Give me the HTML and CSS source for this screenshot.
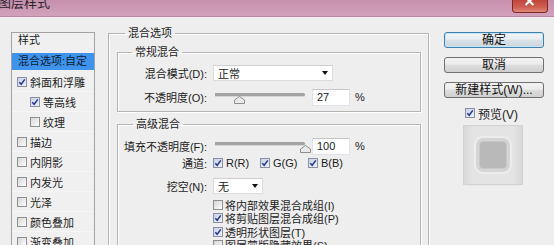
FILE: index.html
```html
<!doctype html>
<html lang="zh-CN">
<head>
	<meta charset="UTF-8">
	<title>图层样式</title>
	<link rel="stylesheet" href="styles.css">
</head>
<body>
	<div class="dlg">
		<div class="titlebar">
			<span class="title">图层样式</span>
			<span class="close">
				<svg width="36" height="13" viewBox="0 0 36 13"><path d="M14 -3 L22 5 M22 -3 L14 5" stroke="#fff" stroke-width="2.2" fill="none"/></svg>
			</span>
		</div>
		<div class="main">
			<div class="stylelist">
				<div class="head">样式</div>
				<div class="cur">混合选项:自定</div>
				<div class="item"><span class="cb on"><svg viewBox="0 0 8 8"><path d="M1.3 4.2 L3.2 6.3 L6.8 1.4"/></svg></span>斜面和浮雕</div>
				<div class="item sub"><span class="cb on"><svg viewBox="0 0 8 8"><path d="M1.3 4.2 L3.2 6.3 L6.8 1.4"/></svg></span>等高线</div>
				<div class="item sub"><span class="cb"></span>纹理</div>
				<div class="item"><span class="cb"></span>描边</div>
				<div class="item"><span class="cb"></span>内阴影</div>
				<div class="item"><span class="cb"></span>内发光</div>
				<div class="item"><span class="cb"></span>光泽</div>
				<div class="item"><span class="cb"></span>颜色叠加</div>
				<div class="item"><span class="cb"></span>渐变叠加</div>
			</div>

			<fieldset class="grp outer">
				<legend>混合选项</legend>
				<fieldset class="grp inner">
					<legend>常规混合</legend>
					<div class="row">
						<span class="lbl">混合模式(D):</span>
						<span class="dd wide">正常<i class="arr"></i></span>
					</div>
					<div class="row">
						<span class="lbl">不透明度(O):</span>
						<span class="slider"><i class="thumb" style="left:27%"><svg width="11" height="8" viewBox="0 0 11 8"><path d="M5.5 0.5 L10.5 4 L10.5 7.5 L0.5 7.5 L0.5 4 Z" fill="#e9e9e9" stroke="#8d8d8d"/></svg></i></span>
						<span class="num">27</span>
						<span class="pct">%</span>
					</div>
				</fieldset>
				<fieldset class="grp inner adv">
					<legend>高级混合</legend>
					<div class="row fill">
						<span class="lbl">填充不透明度(F):</span>
						<span class="slider"><i class="thumb" style="left:100%"><svg width="11" height="8" viewBox="0 0 11 8"><path d="M5.5 0.5 L10.5 4 L10.5 7.5 L0.5 7.5 L0.5 4 Z" fill="#e9e9e9" stroke="#8d8d8d"/></svg></i></span>
						<span class="num">100</span>
						<span class="pct">%</span>
					</div>
					<div class="row chan">
						<span class="lbl">通道:</span>
						<span class="ch"><span class="cb on"><svg viewBox="0 0 8 8"><path d="M1.3 4.2 L3.2 6.3 L6.8 1.4"/></svg></span>R(R)</span>
						<span class="ch"><span class="cb on"><svg viewBox="0 0 8 8"><path d="M1.3 4.2 L3.2 6.3 L6.8 1.4"/></svg></span>G(G)</span>
						<span class="ch"><span class="cb on"><svg viewBox="0 0 8 8"><path d="M1.3 4.2 L3.2 6.3 L6.8 1.4"/></svg></span>B(B)</span>
					</div>
					<div class="row knock">
						<span class="lbl">挖空(N):</span>
						<span class="dd short">无<i class="arr"></i></span>
					</div>
					<div class="opts">
						<div class="opt"><span class="cb"></span>将内部效果混合成组(I)</div>
						<div class="opt"><span class="cb on"><svg viewBox="0 0 8 8"><path d="M1.3 4.2 L3.2 6.3 L6.8 1.4"/></svg></span>将剪贴图层混合成组(P)</div>
						<div class="opt"><span class="cb on"><svg viewBox="0 0 8 8"><path d="M1.3 4.2 L3.2 6.3 L6.8 1.4"/></svg></span>透明形状图层(T)</div>
						<div class="opt"><span class="cb"></span>图层蒙版隐藏效果(S)</div>
					</div>
				</fieldset>
			</fieldset>

			<div class="actions">
				<span class="btn def">确定</span>
				<span class="btn">取消</span>
				<span class="btn">新建样式(W)...</span>
				<div class="pv"><span class="cb on"><svg viewBox="0 0 8 8"><path d="M1.3 4.2 L3.2 6.3 L6.8 1.4"/></svg></span>预览(V)</div>
				<div class="pvbox"><div class="swatch"></div></div>
			</div>
		</div>
	</div>
</body>
</html>
```

FILE: styles.css
```css
*{
	margin: 0;
	padding: 0;
	box-sizing: border-box;
}
body{
	background: #eeeeee;
	font-family: "Liberation Sans", "Noto Sans CJK SC", sans-serif;
	font-size: 11px;
	color: #1c1c1c;
}
.dlg{
	width: 554px;
	height: 245px;
	overflow: hidden;
	background: #eeeeee;
}
.titlebar{
	height: 17px;
	display: flex;
	align-items: flex-start;
	background: linear-gradient(#c690ad, #d1a1bb);
	border-bottom: 1px solid #b3869f;
	overflow: hidden;
}
.title{
	font-size: 13px;
	line-height: 13px;
	margin: -4px 0 0 -2px;
	color: #2b2228;
}
.close{
	margin-left: auto;
	margin-right: 6px;
	width: 36px;
	height: 13px;
	border: 1px solid #7e2a22;
	border-top: none;
	border-radius: 0 0 4px 4px;
	background: linear-gradient(#c0453a, #cf5f50 60%, #e08a7c);
	display: flex;
}
.close svg{
	margin-left: -1px;
}

.main{
	display: flex;
	align-items: flex-start;
	padding: 14px 0 0 11px;
	border-top: 1px solid #f6eef2;
}

/* 左侧样式列表 */
.stylelist{
	flex: none;
	width: 84px;
	height: 230px;
	border: 1px solid #a3a3a3;
	background: #f0f0f0;
}
.head{
	height: 14px;
	line-height: 14px;
	padding-left: 6px;
	margin-bottom: 6px;
}
.cur{
	height: 17px;
	line-height: 17px;
	padding-left: 6px;
	background: #3e94ec;
	color: #0f1b30;
	margin-bottom: 2px;
}
.item{
	height: 20px;
	display: flex;
	align-items: center;
	padding-left: 5px;
	border-bottom: 1px solid #f6f6f6;
}
.item.sub{
	padding-left: 18px;
}
.cb{
	flex: none;
	display: inline-flex;
	width: 10px;
	height: 10px;
	margin-right: 3px;
	border: 1px solid #8e8f8f;
	background: linear-gradient(135deg, #d6d6d6, #fdfdfd);
}
.cb.on{
	background: linear-gradient(135deg, #c9d1ea, #eef1fa);
	border-color: #8a8fa6;
}
.cb svg{
	width: 8px;
	height: 8px;
}
.cb path{
	fill: none;
	stroke: #24378a;
	stroke-width: 1.5;
}

/* 分组框 */
.grp{
	border: 1px solid #b4b4b4;
	box-shadow: inset 1px 1px 0 #fff, 1px 1px 0 #fff;
	min-width: 0;
}
.grp legend{
	font-size: 11px;
	line-height: 14px;
	padding: 0 3px;
}
.outer{
	flex: none;
	width: 321px;
	height: 240px;
	margin: -6px 0 0 13px;
	padding: 5px 7px 0 8px;
}
.outer > legend{
	margin-left: 8px;
}
.inner{
	padding: 2px 0 2px 0;
}
.inner > legend{
	margin-left: 14px;
}
.adv{
	margin-top: 5px;
	padding-top: 5px;
}
.adv > legend{
	margin-left: 15px;
}

.row{
	display: flex;
	align-items: center;
	height: 24px;
}
.row.fill{
	height: 20px;
}
.row.chan{
	height: 14px;
}
.row.knock{
	height: 20px;
	margin-top: 6px;
}
.lbl{
	flex: none;
	width: 89px;
	margin-right: 6px;
	text-align: right;
	white-space: nowrap;
}
.dd{
	display: flex;
	align-items: center;
	height: 16px;
	padding-left: 4px;
	background: #fff;
	border: 1px solid #dcdcdc;
	border-top-color: #cfcfcf;
}
.dd.wide{
	width: 120px;
}
.dd.short{
	width: 50px;
}
.arr{
	margin-left: auto;
	margin-right: 4px;
	border-left: 3.5px solid transparent;
	border-right: 3.5px solid transparent;
	border-top: 4px solid #111;
}
.slider{
	flex: none;
	position: relative;
	width: 90px;
	height: 14px;
	margin-left: 2px;
}
.slider::before{
	content: "";
	position: absolute;
	left: 0;
	right: 0;
	top: 3px;
	height: 3px;
	background: #a3a3a3;
	border-radius: 0 2px 2px 0;
	box-shadow: 0 1px 0 #d6d6d6;
}
.thumb{
	position: absolute;
	top: 6px;
	width: 11px;
	height: 8px;
	margin-left: -5px;
	display: flex;
}
.num{
	flex: none;
	width: 38px;
	height: 17px;
	margin-left: 7px;
	padding-left: 4px;
	line-height: 15px;
	background: #fff;
	border: 1px solid #e2e3ea;
	border-top-color: #c4c6cc;
}
.pct{
	margin-left: 5px;
}
.ch{
	display: flex;
	align-items: center;
	width: 47px;
}
.ch:first-of-type{
	margin-left: 2px;
}
.ch + .ch{
	width: 48px;
}
.opts{
	margin: 2px 0 0 95px;
}
.opt{
	height: 13.5px;
	display: flex;
	align-items: center;
	white-space: nowrap;
}
.opt .cb{
	margin-right: 2px;
}

/* 右侧按钮 */
.actions{
	flex: none;
	width: 100px;
	margin-left: 15px;
}
.btn{
	display: block;
	height: 16px;
	margin-bottom: 9px;
	line-height: 14px;
	text-align: center;
	font-size: 12px;
	color: #111;
	border: 1px solid #707070;
	border-radius: 3px;
	background: linear-gradient(#f3f3f3, #ebebeb 45%, #dddddd 50%, #cfcfcf);
}
.btn.def{
	border-color: #3c7fb1;
	box-shadow: inset 0 0 0 1px #c4e6f8;
	background: linear-gradient(#f1f5f8, #e7edf1 45%, #d9e1e7 50%, #ccd6dd);
}
.btn:nth-child(3){
	margin-bottom: 0;
}
.pv{
	display: flex;
	align-items: center;
	height: 16px;
	margin-top: 7px;
	padding-left: 21px;
	font-size: 12px;
}
.pvbox{
	display: flex;
	align-items: center;
	justify-content: center;
	width: 60px;
	height: 60px;
	margin: 4px 0 0 19px;
	border: 1px solid #d2d2d2;
	background: linear-gradient(90deg, #d8d8d8, #e4e4e4 15%, #e4e4e4 85%, #d8d8d8);
	box-shadow: 0 5px 0 -4px #e6e6e6;
}
.swatch{
	width: 28px;
	height: 28px;
	border-radius: 4px;
	background: #b9b9b9;
	border: 1px solid #c9c9c9;
	box-shadow: 0 0 0 3px #d5d5d5, 0 0 0 5px #ededed;
}
```
